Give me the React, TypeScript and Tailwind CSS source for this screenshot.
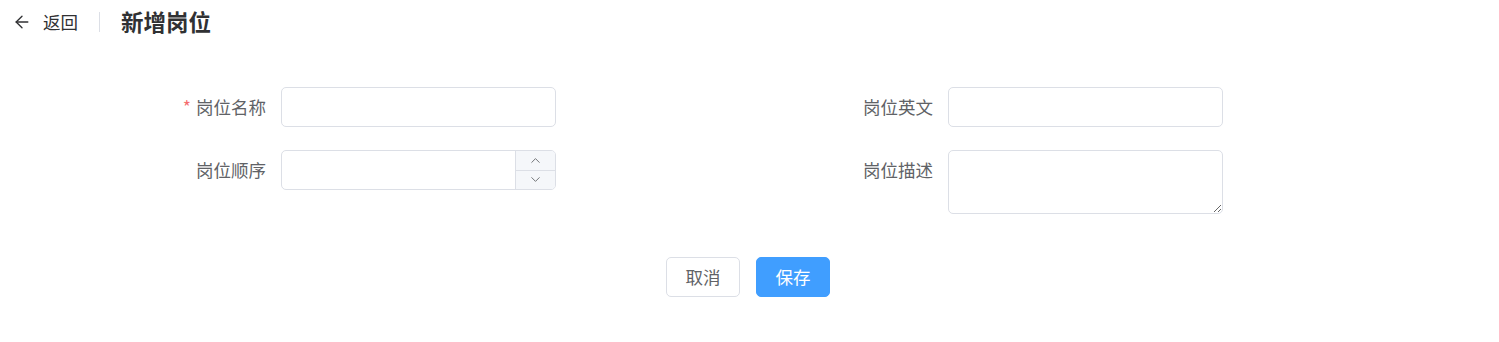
import React from 'react';
import { ArrowLeft, ChevronUp, ChevronDown } from 'lucide-react';

const font = { fontFamily: '"Noto Sans CJK SC", "Noto Sans", sans-serif' };

const Label: React.FC<{ text: string; required?: boolean }> = ({ text, required }) => (
    <label className="w-[125px] shrink-0 pr-[15px] text-right text-[17.5px] leading-[40px] text-[#606266]">
        {required && <span className="mr-[5px] text-[#f56c6c]">*</span>}
        {text}
    </label>
);

const App: React.FC = () => {
    return (
        <div className="min-h-screen bg-white" style={font}>
            {/* Page header */}
            <div className="flex h-[44px] items-center pl-[12px]">
                <button className="flex items-center text-[#303133]">
                    <ArrowLeft className="h-[20px] w-[20px]" strokeWidth={1.6} />
                    <span className="ml-[11px] text-[17.5px]">返回</span>
                </button>
                <div className="ml-[21px] mr-[21px] h-[20px] w-px bg-[#dcdfe6]" />
                <h1 className="text-[22.5px] font-bold text-[#303133]">新增岗位</h1>
            </div>

            {/* Form */}
            <div className="mt-[43px] ml-[156px] grid w-[1334px] grid-cols-2">
                <div className="flex flex-col gap-[23px]">
                    <div className="flex">
                        <Label text="岗位名称" required />
                        <input className="h-[40px] w-[275px] rounded-[5px] border border-[#dcdfe6] px-[14px] text-[17.5px] outline-none" />
                    </div>
                    <div className="flex">
                        <Label text="岗位顺序" />
                        <div className="flex h-[40px] w-[275px] overflow-hidden rounded-[5px] border border-[#dcdfe6]">
                            <input className="min-w-0 flex-1 px-[14px] text-[17.5px] outline-none" />
                            <div className="flex w-[40px] flex-col border-l border-[#dcdfe6] bg-[#f5f7fa] text-[#606266]">
                                <div className="flex flex-1 items-center justify-center border-b border-[#dcdfe6]">
                                    <ChevronUp className="h-[15px] w-[15px]" strokeWidth={1.4} />
                                </div>
                                <div className="flex flex-1 items-center justify-center">
                                    <ChevronDown className="h-[15px] w-[15px]" strokeWidth={1.4} />
                                </div>
                            </div>
                        </div>
                    </div>
                </div>
                <div className="flex flex-col gap-[23px]">
                    <div className="flex">
                        <Label text="岗位英文" />
                        <input className="h-[40px] w-[275px] rounded-[5px] border border-[#dcdfe6] px-[14px] text-[17.5px] outline-none" />
                    </div>
                    <div className="flex">
                        <Label text="岗位描述" />
                        <textarea className="h-[64px] w-[275px] rounded-[5px] border border-[#dcdfe6] px-[14px] py-[6px] text-[17.5px] outline-none" />
                    </div>
                </div>
            </div>

            {/* Actions */}
            <div className="mt-[43px] flex justify-center gap-[16px] pr-[3px]">
                <button className="h-[40px] w-[74px] rounded-[5px] border border-[#dcdfe6] bg-white text-[17.5px] text-[#606266]">
                    取消
                </button>
                <button className="h-[40px] w-[74px] rounded-[5px] border border-[#409eff] bg-[#409eff] text-[17.5px] text-white">
                    保存
                </button>
            </div>
        </div>
    );
};

export default App;
